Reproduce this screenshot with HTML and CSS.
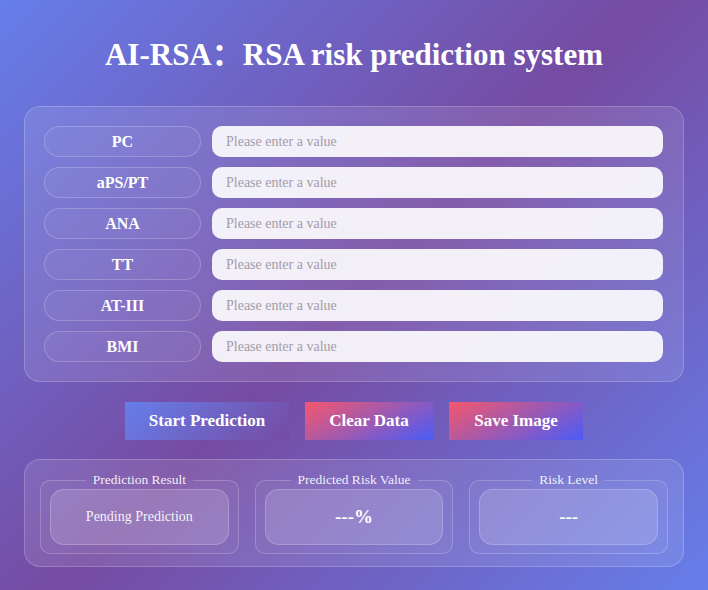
FILE: index.html
```html
<!DOCTYPE html>
<html lang="en">
<head>
    <meta charset="UTF-8">
    <meta name="viewport" content="width=device-width, initial-scale=1.0">
    <title>AI-RSA</title>
    <link rel="stylesheet" href="styles.css">
</head>
<body>
    <div class="container">
        <h1 class="title">AI-RSA：RSA risk prediction system</h1>

        <!-- 输入区 -->
        <div class="panel form-panel">
            <div class="row">
                <div class="label">PC</div>
                <input class="field" type="text" placeholder="Please enter a value">
            </div>
            <div class="row">
                <div class="label">aPS/PT</div>
                <input class="field" type="text" placeholder="Please enter a value">
            </div>
            <div class="row">
                <div class="label">ANA</div>
                <input class="field" type="text" placeholder="Please enter a value">
            </div>
            <div class="row">
                <div class="label">TT</div>
                <input class="field" type="text" placeholder="Please enter a value">
            </div>
            <div class="row">
                <div class="label">AT-III</div>
                <input class="field" type="text" placeholder="Please enter a value">
            </div>
            <div class="row">
                <div class="label">BMI</div>
                <input class="field" type="text" placeholder="Please enter a value">
            </div>
        </div>

        <!-- 按钮 -->
        <div class="actions">
            <button class="btn btn-start">Start Prediction</button>
            <button class="btn btn-alt btn-clear">Clear Data</button>
            <button class="btn btn-alt btn-save">Save Image</button>
        </div>

        <!-- 结果 -->
        <div class="panel result-panel">
            <fieldset class="result">
                <legend>Prediction Result</legend>
                <div class="result-box">Pending Prediction</div>
            </fieldset>
            <fieldset class="result">
                <legend>Predicted Risk Value</legend>
                <div class="result-box strong">---%</div>
            </fieldset>
            <fieldset class="result">
                <legend>Risk Level</legend>
                <div class="result-box strong">---</div>
            </fieldset>
        </div>
    </div>
</body>
</html>
```

FILE: styles.css
```css
* {
    box-sizing: border-box;
}
html, body {
    margin: 0;
    padding: 0;
}
body {
    min-height: 100vh;
    font-family: "Liberation Serif", "Times New Roman", serif;
    color: #fff;
    background: linear-gradient(135deg, #667eea 0%, #764ba2 50%, #667eea 100%);
}
.container {
    width: 660px;
    margin: 0 auto;
    padding-top: 37px;
}
.title {
    margin: 0 0 33px;
    font-family: "Liberation Serif", "Noto Sans CJK SC", serif;
    font-size: 31px;
    line-height: 36px;
    font-weight: bold;
    text-align: center;
}
.panel {
    background-color: rgba(255, 255, 255, 0.1);
    border: 1px solid rgba(255, 255, 255, 0.2);
    border-radius: 16px;
}
/* 输入区 */
.form-panel {
    display: flex;
    flex-direction: column;
    gap: 10px;
    padding: 19px 20px 19px 19px;
}
.row {
    display: flex;
    gap: 11px;
    height: 31px;
}
.label {
    flex: 0 0 157px;
    display: flex;
    align-items: center;
    justify-content: center;
    border: 1px solid rgba(255, 255, 255, 0.2);
    border-radius: 16px;
    background-color: rgba(255, 255, 255, 0.04);
    font-size: 16px;
    font-weight: bold;
}
.field {
    flex: 1;
    min-width: 0;
    height: 31px;
    padding: 1px 14px 0;
    border: none;
    border-radius: 10px;
    background-color: rgba(255, 255, 255, 0.9);
    font-family: inherit;
    font-size: 14px;
    color: #333;
    outline: none;
}
.field::placeholder {
    color: #a29cab;
}
/* 按钮 */
.actions {
    display: flex;
    justify-content: center;
    gap: 16px;
    margin: 20px 0 19px;
}
.btn {
    height: 38px;
    padding: 0;
    border: none;
    border-radius: 0;
    color: #fff;
    font-family: inherit;
    font-size: 17px;
    font-weight: bold;
    cursor: pointer;
}
.btn-start {
    width: 164px;
    background: linear-gradient(135deg, #667eea 0%, #764ba2 100%);
}
.btn-alt {
    background: linear-gradient(150deg, #f5576c 0%, #4a5cf6 100%);
}
.btn-clear {
    width: 128px;
}
.btn-save {
    width: 134px;
}
/* 结果 */
.result-panel {
    display: flex;
    gap: 16px;
    padding: 12px 15px 12px 15px;
}
.result {
    flex: 1;
    min-width: 0;
    margin: 0;
    padding: 1px 9px 8px;
    border: 1px solid rgba(255, 255, 255, 0.2);
    border-radius: 10px;
    background-color: rgba(255, 255, 255, 0.04);
}
.result legend {
    margin: 0 auto;
    padding: 0 7px;
    font-size: 13.5px;
    line-height: 16px;
    color: rgba(255, 255, 255, 0.9);
}
.result-box {
    display: flex;
    align-items: center;
    justify-content: center;
    height: 56px;
    border: 1px solid rgba(255, 255, 255, 0.2);
    border-radius: 14px;
    background-color: rgba(255, 255, 255, 0.14);
    font-size: 14px;
    color: rgba(255, 255, 255, 0.92);
}
.result-box.strong {
    font-size: 19px;
    font-weight: bold;
    color: #fff;
}
```
